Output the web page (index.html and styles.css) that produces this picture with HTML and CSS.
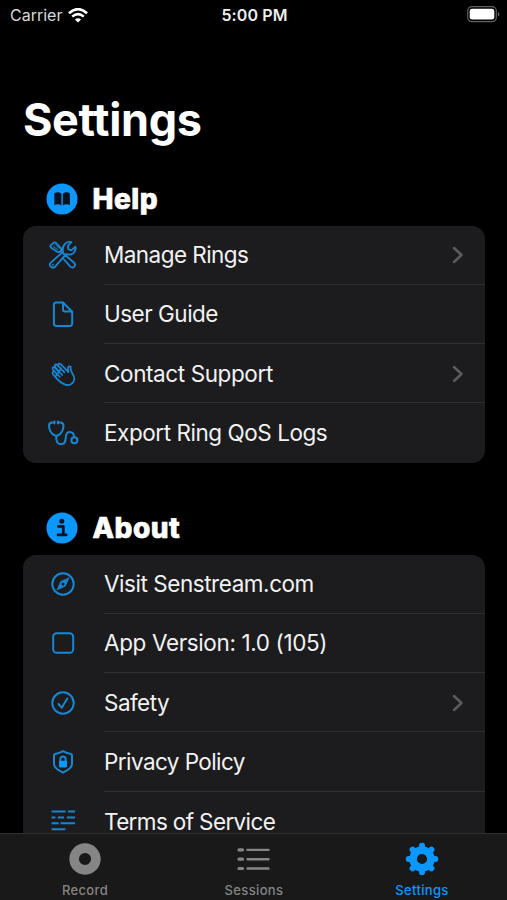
FILE: index.html
```html
<!DOCTYPE html>
<html lang="en">
<head>
<meta charset="utf-8">
<title>Settings</title>
<link rel="stylesheet" href="styles.css">
</head>
<body>
<div class="app">
  <header class="status">
    <div class="carrier"><span>Carrier</span>
      <svg width="20" height="15" viewBox="0 0 20 15" fill="none" stroke="#fff" stroke-width="2.5"><path d="M.9 5.2Q10-3 19.1 5.2M4.2 8.6Q10 3.6 15.8 8.6"/><path d="M10 14.6 6.9 11.5Q10 9 13.1 11.5Z" fill="#fff" stroke="none"/></svg>
    </div>
    <div class="clock">5:00 PM</div>
    <svg class="battery" width="33" height="17" viewBox="0 0 33 17"><rect x=".7" y=".7" width="28.6" height="15" rx="4.2" fill="none" stroke="#606060" stroke-width="1.2"/><rect x="2.7" y="2.8" width="24.6" height="10.8" rx="2.4" fill="#fff"/><path d="M30.8 6v4.6q1.6-.6 1.6-2.3T30.8 6" fill="#606060"/></svg>
  </header>
  <main class="content">
    <h1>Settings</h1>
    <section>
      <h2>
        <svg width="32" height="32" viewBox="0 0 32 32"><circle cx="16" cy="16" r="15.5" fill="#0a98ff"/><path d="M15.4 10.7Q12.2 8.2 8.3 10.2V22.2Q12 20.4 15.4 22.5ZM16.8 10.7Q20 8.2 23.9 10.2V22.2Q20.2 20.4 16.8 22.5Z" fill="#06131f"/></svg>
        <span>Help</span></h2>
      <div class="card">
        <div class="row">
          <svg class="icon tools" viewBox="0 0 32 32"><path d="M3.6 6.4 6.8 3.7Q8 2.9 9.2 4L14 9.4Q14.6 11 13.6 12.2 12.2 13.4 10.6 12.9L4.2 8.7Q2.8 7.6 3.6 6.4ZM14.4 12.8l12.4 10.7q2.3 2.2.5 4.1t-4.2-.3L16.6 20M3.8 27.6q-2.1-2.3.2-4.2L16 12.9Q14.9 7.5 18.5 4.4 21.4 2.1 24.4 3.2L20.8 7 21.4 10.4 24.6 11.1 28.4 7.6Q29.3 11.4 26.5 14.1 23.6 16.5 18.9 15.2L8 27.8Q5.8 29.7 3.8 27.6ZM5.8 25.7h.2"/><path class="detail" d="M6.2 7.5l4.6 3.2M8.4 5.6l3.6 3.8"/></svg>
          <div class="label"><span class="manage">Manage Rings</span><svg class="chevron" viewBox="0 0 12 18"><path d="M2 2l7.5 7L2 16"/></svg></div>
        </div>
        <div class="row">
          <svg class="icon" viewBox="0 0 32 32"><path d="M9.3 4.5H16l9.2 9.2v11.8q0 2.4-2.4 2.4H9.3q-2.4 0-2.4-2.4V6.9q0-2.4 2.4-2.4ZM16 4.8v6.8q0 2 2 2h7"/></svg>
          <div class="label"><span class="guide">User Guide</span></div>
        </div>
        <div class="row">
          <svg class="icon thin" viewBox="0 0 32 32"><path d="M8.2 18.9 5.9 15.9Q5 14.2 6.2 13.6 7 13.1 7.9 14L13 19M9.9 16.3 5.9 11.5Q5.1 9.8 6.3 9.3 7.2 8.9 8 9.8L15.3 17M12 13.7 8.5 9.5Q7.2 7.3 8.4 6.6 9.5 6 10.5 7.1L17.3 14.3M14 10.7 11.5 8Q10.5 6.2 11.9 5.6 12.8 5.3 13.7 6.2L21.4 14.1Q20.7 11.2 21.1 9.6 21.9 7.5 23.7 8.8 23.1 11.9 25.2 15.2 28.8 20.2 26.3 24 23.2 28.3 18.2 26.6 13.2 24.8 8.2 18.9Z"/></svg>
          <div class="label"><span class="contact">Contact Support</span><svg class="chevron" viewBox="0 0 12 18"><path d="M2 2l7.5 7L2 16"/></svg></div>
        </div>
        <div class="row">
          <svg class="icon" viewBox="0 0 32 32"><path d="M7.5 5.5H5.2Q2 5.5 2 9 2.5 15 6.4 17.6 9.3 19.7 12.2 17.6 16.2 14.8 16.5 9 16.5 5.5 13.3 5.5H11M7.5 4.5v2M11 4.5v2M9.3 19V22Q9.8 27.2 14.2 27.2 18.4 27.2 18.7 21.4 18.8 14.8 22.8 15 27 15.1 27 20.1"/><circle cx="27.4" cy="23.3" r="3"/></svg>
          <div class="label"><span class="export">Export Ring QoS Logs</span></div>
        </div>
      </div>
    </section>
    <section class="about">
      <h2>
        <svg width="32" height="32" viewBox="0 0 32 32"><circle cx="16" cy="16" r="15.5" fill="#0a98ff"/><circle cx="15.8" cy="9.3" r="2.5" fill="#06131f"/><path d="M12.4 14.4h4.9v8.2M12 22.9h8.2" fill="none" stroke="#06131f" stroke-width="2.8" stroke-linecap="round" stroke-linejoin="round"/></svg>
        <span>About</span></h2>
      <div class="card">
        <div class="row">
          <svg class="icon" viewBox="0 0 32 32"><circle cx="16" cy="16" r="10.7"/><path d="M21.8 10.2 18.3 18.1 10.2 21.8 13.7 13.7Z" fill="#1687d4" stroke-width=".8"/><circle cx="16" cy="16" r="1.5" fill="#1c1c1e" stroke="none"/></svg>
          <div class="label"><span class="visit">Visit Senstream.com</span></div>
        </div>
        <div class="row">
          <svg class="icon" viewBox="0 0 32 32"><rect x="6.2" y="6.2" width="20" height="19.6" rx="3.6"/></svg>
          <div class="label"><span class="version">App Version: 1.0 (105)</span></div>
        </div>
        <div class="row">
          <svg class="icon" viewBox="0 0 32 32"><circle cx="16" cy="16" r="10.7"/><path d="M11.5 17l3.2 3.7 5.6-9.2"/></svg>
          <div class="label"><span class="safety">Safety</span><svg class="chevron" viewBox="0 0 12 18"><path d="M2 2l7.5 7L2 16"/></svg></div>
        </div>
        <div class="row">
          <svg class="icon" viewBox="0 0 32 32"><path d="M16 5.2Q19.5 7.2 24 8.1 25 8.3 25 9.4V18.3Q24.8 22.4 16 26.7 7.2 22.4 7 18.3V9.4Q7 8.3 8 8.1 12.5 7.2 16 5.2Z"/><path d="M13.3 14.8v-1.6Q13.4 10.4 16 10.4t2.7 2.8v1.6"/><rect x="12" y="14.8" width="8" height="6.6" rx="1.1" fill="#0a98ff" stroke="none"/></svg>
          <div class="label"><span class="privacy">Privacy Policy</span></div>
        </div>
        <div class="row">
          <svg class="icon lines" viewBox="0 0 32 32"><path d="M4.6 6.5h14M21 6.5h7M4.6 12.4h3.8M10.7 12.4h6.4M19.8 12.4H28M4.6 18.3h7M13.6 18.3H28M4.6 24.2h13.8"/></svg>
          <div class="label"><span class="terms">Terms of Service</span></div>
        </div>
      </div>
    </section>
  </main>
  <nav class="tabs">
    <div class="tab"><svg viewBox="0 0 36 36"><circle cx="18" cy="18" r="10.9" fill="none" stroke="#858585" stroke-width="9.6"/></svg><span>Record</span></div>
    <div class="tab"><svg viewBox="0 0 36 36"><path d="M3 8.9h3.5M3 18.2h3.5M3 27.5h3.5" stroke="#858585" stroke-width="3.2" stroke-linecap="round"/><path d="M11.5 8.9h21M11.5 18.2h21M11.5 27.5h21" stroke="#858585" stroke-width="2.4" stroke-linecap="round"/></svg><span>Sessions</span></div>
    <div class="tab active"><svg viewBox="0 0 36 36"><circle cx="18" cy="18" r="8.9" fill="none" stroke="#0a98ff" stroke-width="7.6"/><path d="M18 4.7v3M18 28.3v3M4.7 18h3M28.3 18h3M8.6 8.6l2.1 2.1M25.3 25.3l2.1 2.1M27.4 8.6l-2.1 2.1M10.7 25.3l-2.1 2.1" stroke="#0a98ff" stroke-width="6" stroke-linecap="round"/></svg><span>Settings</span></div>
  </nav>
</div>
</body>
</html>
```

FILE: styles.css
```css
* { box-sizing: border-box; }
body { margin: 0; background: #000; color: #fff; font-family: Inter, "Liberation Sans", sans-serif; }
.app { width: 507px; height: 900px; overflow: hidden; display: flex; flex-direction: column; }
svg { display: block; flex: none; }
.status { height: 30px; flex: none; display: grid; grid-template-columns: 1fr auto 1fr; align-items: center; padding: 0 7px 0 10px; font-size: 16px; }
.carrier { display: flex; align-items: center; gap: 6px; color: #d8d8d8; }
.clock { margin-right: 1px; font-weight: 600; color: #eee; letter-spacing: .1px; }
.battery { justify-self: end; margin-top: -1px; }
.content { flex: 1; min-height: 0; overflow: hidden; padding: 0 22px 0 23px; }
h1 { margin: 62px 0 0; height: 56px; line-height: 56px; font-size: 45px; font-weight: 700; letter-spacing: -.35px; white-space: nowrap; }
h2 { margin: 0; height: 32px; display: flex; align-items: center; gap: 14.5px; padding-left: 23px; font-size: 28px; font-weight: 800; letter-spacing: .5px; -webkit-text-stroke: .7px #fff; }
h1 + section { margin-top: 35px; }
.about { margin-top: 49.5px; }
.card { margin-top: 10.5px; background: #1c1c1e; border-radius: 13px; overflow: hidden; }
.row { height: 59.25px; display: flex; align-items: center; padding-left: 24px; }
.icon { width: 32px; height: 32px; fill: none; stroke: #1687d4; stroke-width: 2; stroke-linecap: round; stroke-linejoin: round; }
.tools { stroke-width: 1.8; }
.tools .detail { stroke-width: 1; }
.thin { stroke-width: 1.7; }
.lines { stroke-width: 2; stroke-linecap: butt; }
.label { flex: 1; height: 100%; margin-left: 25px; padding: 1px 21.5px 0 0; display: flex; align-items: center; justify-content: space-between; border-bottom: 1px solid #303032; font-size: 22.5px; line-height: 22px; color: #f2f2f2; white-space: nowrap; }
.row:last-child .label { border-bottom: 0; }
.manage { letter-spacing: -.55px; }
.guide { letter-spacing: -.5px; }
.contact { letter-spacing: -.4px; }
.export { letter-spacing: -.45px; }
.visit { letter-spacing: -.45px; }
.version { letter-spacing: -.37px; }
.safety { letter-spacing: -.55px; }
.privacy { letter-spacing: -.57px; }
.terms { letter-spacing: -.63px; }
.chevron { width: 12px; height: 18px; fill: none; stroke: #5b5b5e; stroke-width: 2.5; stroke-linecap: round; stroke-linejoin: round; }
.tabs { height: 67px; flex: none; display: grid; grid-template-columns: 169px 169px 168px; background: #191919; border-top: 1px solid #303030; }
.tab { display: flex; flex-direction: column; align-items: center; padding-top: 7px; color: #858585; font-size: 13px; font-weight: 500; line-height: 16px; letter-spacing: .35px; }
.tab svg { width: 36px; height: 36px; margin-bottom: 5px; }
.tab span { padding-left: 1px; }
.tab.active { color: #0a98ff; }
.tab.active span { padding-left: 0; }
```
